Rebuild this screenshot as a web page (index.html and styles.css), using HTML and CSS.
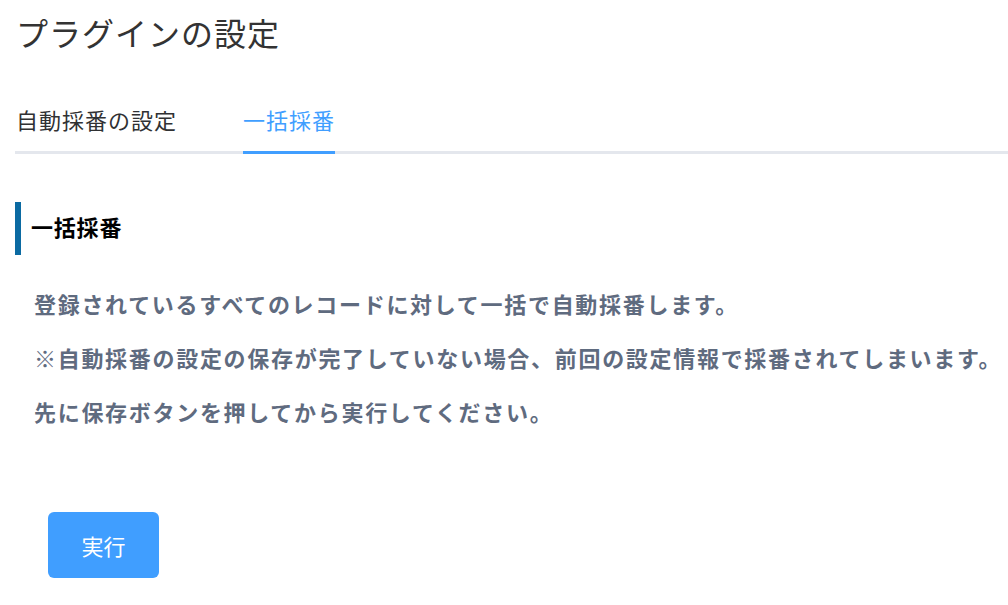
FILE: index.html
```html
<!DOCTYPE html>
<html lang="ja">
<head>
<meta charset="utf-8">
<link rel="stylesheet" href="styles.css">
</head>
<body>
<div class="page">
  <h1 class="title">プラグインの設定</h1>
  <div class="tabs">
    <div class="tab">自動採番の設定</div>
    <div class="tab active">一括採番</div>
  </div>
  <div class="section">
    <h2 class="heading">一括採番</h2>
    <div class="desc">
      <p>登録されているすべてのレコードに対して一括で自動採番します。</p>
      <p>※自動採番の設定の保存が完了していない場合、前回の設定情報で採番されてしまいます。</p>
      <p>先に保存ボタンを押してから実行してください。</p>
    </div>
    <button class="btn">実行</button>
  </div>
</div>
</body>
</html>
```
FILE: styles.css
```css
html, body {
  margin: 0;
  padding: 0;
  background: #fff;
}
body {
  font-family: "Noto Sans CJK JP", "Noto Sans", sans-serif;
  overflow: hidden;
}
.page {
  padding: 0 0 0 15px;
}
.title {
  margin: 0;
  padding-top: 10px;
  font-size: 32px;
  font-weight: 400;
  line-height: 44px;
  color: #333;
  letter-spacing: 1px;
  padding-left: 1px;
}
.tabs {
  display: flex;
  gap: 66px;
  margin-top: 36px;
  border-bottom: 3px solid #e4e7ed;
  height: 64px;
  box-sizing: border-box;
}
.tab {
  font-size: 22px;
  line-height: 58px;
  height: 61px;
  color: #303133;
  letter-spacing: 1px;
  padding-left: 1px;
}
.tab.active {
  color: #409eff;
  border-bottom: 3px solid #409eff;
  margin-bottom: -3px;
  padding-left: 0;
}
.section {
  padding-top: 48px;
}
.heading {
  margin: 0;
  border-left: 6px solid #0b6aa2;
  height: 53px;
  line-height: 48px;
  padding-left: 10px;
  font-size: 22px;
  font-weight: 700;
  color: #000;
  letter-spacing: 0.8px;
}
.desc {
  padding: 21px 0 0 19px;
}
.desc p {
  margin: 0;
  line-height: 54px;
  font-size: 22px;
  font-weight: 600;
  color: #5f6b7f;
  letter-spacing: 1.7px;
  white-space: nowrap;
}
.btn {
  display: block;
  margin: 74px 0 0 33px;
  width: 111px;
  height: 66px;
  border: none;
  border-radius: 6px;
  background: #409eff;
  color: #fff;
  font-family: inherit;
  font-size: 22px;
  padding: 0;
}
```
